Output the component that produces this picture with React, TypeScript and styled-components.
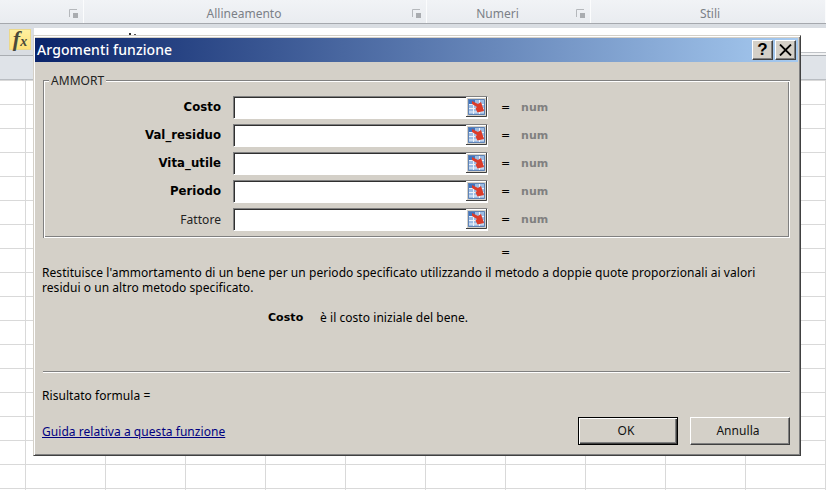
import React from "react";
import styled, { createGlobalStyle } from "styled-components";

const Global = createGlobalStyle`
  html, body { margin: 0; padding: 0; background: #fff; }
`;

const Page = styled.div`
  position: relative;
  width: 826px;
  height: 490px;
  overflow: hidden;
  display: flex;
  flex-direction: column;
  font-family: "Noto Sans", "DejaVu Sans", sans-serif;
  background: #fff;
`;

const Ribbon = styled.div`
  height: 24px;
  flex: none;
  box-sizing: border-box;
  display: flex;
  background: linear-gradient(#f1f3f6, #e9ecf0);
  border-bottom: 1px solid #a5a8ad;
`;

const RibbonGroup = styled.div<{ $w: number; $shift: number }>`
  width: ${(p) => p.$w}px;
  flex: ${(p) => (p.$w ? "none" : "1")};
  position: relative;
  box-sizing: border-box;
  padding-right: ${(p) => Math.max(p.$shift, 0)}px;
  padding-left: ${(p) => Math.max(-p.$shift, 0)}px;
  text-align: center;
  font-size: 12px;
  line-height: 27px;
  color: #7b8087;
  border-right: 1px solid #fbfcfd;
`;

const Launcher = styled.svg`
  position: absolute;
  right: 5px;
  top: 9px;
`;

const FormulaBar = styled.div`
  height: 32px;
  flex: none;
  display: flex;
  box-sizing: border-box;
  background: #d9dde2;
  border-bottom: 1px solid #a9adb2;
  padding-top: 5px;
`;

const FxButton = styled.div`
  width: 22px;
  height: 21px;
  margin-left: 9px;
  flex: none;
  background: linear-gradient(#fff0a0, #ffe27a);
  border: 1px solid #ecd98c;
  box-sizing: border-box;
  display: flex;
  align-items: baseline;
  justify-content: center;
  font-family: "Liberation Serif", serif;
  font-style: italic;
  font-weight: 700;
  font-size: 22px;
  line-height: 18px;
  color: #4a4a3a;
  white-space: nowrap;
`;

const FxSmall = styled.span`
  font-size: 14px;
  margin-left: 0;
`;

const FormulaInput = styled.div`
  flex: 1;
  margin-left: 3px;
  margin-top: -1px;
  height: 27px;
  position: relative;
  background: linear-gradient(#fff 0 24px, #c0c3c7 24px 25px, #f2f3f4 25px);
`;

const ClippedGlyph = styled.svg`
  position: absolute;
  left: 95px;
  top: 5px;
`;

const ColumnHeaders = styled.div`
  height: 24px;
  flex: none;
  background: #dfe3e8;
  border-bottom: 1px solid #b9bdc2;
  box-sizing: border-box;
`;

const Sheet = styled.div`
  flex: 1;
  background-color: #fff;
  background-image:
    linear-gradient(to right, #d9d9d9 1px, transparent 1px),
    linear-gradient(to bottom, #d9d9d9 1px, transparent 1px);
  background-size: 80px 24px;
  background-position: 25px 0;
`;

const Dialog = styled.div`
  position: absolute;
  left: 33px;
  top: 35px;
  width: 768px;
  height: 421px;
  box-sizing: border-box;
  display: flex;
  flex-direction: column;
  background: #d4d0c8;
  border-top: 1px solid #d4d0c8;
  border-left: 1px solid #d4d0c8;
  border-right: 1px solid #404040;
  border-bottom: 1px solid #404040;
  box-shadow: inset 1px 1px 0 #fff, inset -1px -1px 0 #808080;
  padding: 2px 2px 0 1px;
  font-size: 12px;
  letter-spacing: 0.05px;
  color: #000;
`;

const TitleBar = styled.div`
  height: 24px;
  flex: none;
  display: flex;
  align-items: center;
  justify-content: space-between;
  padding: 0 2px 0 2px;
  background: linear-gradient(to right, #0a246a, #a6caf0);
`;

const Title = styled.div`
  color: #fff;
  font-size: 14px;
  line-height: 22px;
  margin-top: -1px;
  font-weight: 500;
  letter-spacing: 0.1px;
`;

const TitleButtons = styled.div`
  display: flex;
  gap: 2px;
`;

const TitleButton = styled.div`
  width: 21px;
  height: 20px;
  box-sizing: border-box;
  background: #d4d0c8;
  border: 1px solid;
  border-color: #fff #404040 #404040 #fff;
  display: flex;
  align-items: center;
  justify-content: center;
  box-shadow: inset -1px -1px 0 #808080;
`;

const QuestionMark = styled.span`
  font-family: "Liberation Sans", sans-serif;
  font-weight: 700;
  font-size: 17px;
  line-height: 16px;
`;

const Body = styled.div`
  flex: 1;
  display: flex;
  flex-direction: column;
  padding: 18px 8px 0 7px;
`;

const GroupBox = styled.div`
  margin: 0 0 0 1px;
  padding: 13px 0 0 0;
  height: 158px;
  box-sizing: border-box;
  box-shadow: inset 1px 1px 0 #808080, inset 2px 2px 0 #fff, inset -1px -1px 0 #fff, inset -2px -2px 0 #808080;
  position: relative;
`;

const GroupLegend = styled.div`
  position: absolute;
  left: 6px;
  top: -6px;
  padding: 0 2px;
  background: #d4d0c8;
  font-size: 12px;
  line-height: 14px;
  color: #222;
`;

const ArgRow = styled.div`
  height: 28px;
  display: flex;
  align-items: center;
`;

const ArgLabel = styled.div<{ $bold?: boolean }>`
  width: 178px;
  flex: none;
  text-align: right;
  font-family: ${(p) => (p.$bold ? '"DejaVu Sans", sans-serif' : "inherit")};
  font-size: ${(p) => (p.$bold ? 11.7 : 12)}px;
  font-weight: ${(p) => (p.$bold ? 700 : 400)};
  color: ${(p) => (p.$bold ? "#000" : "#222")};
`;

const ArgInput = styled.div`
  width: 255px;
  height: 23px;
  margin-left: 12px;
  flex: none;
  box-sizing: border-box;
  background: #fff;
  border: 1px solid;
  border-color: #808080 #fff #fff #808080;
  box-shadow: inset 1px 1px 0 #303030;
  display: flex;
  justify-content: flex-end;
  align-items: center;
`;

const RangeIcon = styled.svg`
  display: block;
  flex: none;
`;

const Equals = styled.div`
  margin-left: 13px;
  width: 20px;
  flex: none;
  font-family: "DejaVu Sans", sans-serif;
  font-size: 11px;
`;

const NumHint = styled.div`
  font-family: "DejaVu Sans", sans-serif;
  font-size: 11px;
  font-weight: 700;
  color: #808080;
`;

const ResultEquals = styled.div`
  height: 15px;
  margin-top: 7px;
  padding-left: 459px;
  line-height: 15px;
  font-family: "DejaVu Sans", sans-serif;
  font-size: 11px;
`;

const Description = styled.p`
  margin: 5px 0 0 0;
  line-height: 15px;
  width: 745px;
`;

const ParamHelp = styled.div`
  display: flex;
  margin-top: 15px;
  padding-left: 226px;
  line-height: 15px;
`;

const ParamName = styled.span`
  font-family: "DejaVu Sans", sans-serif;
  font-size: 11px;
  font-weight: 700;
  width: 52px;
`;

const Separator = styled.div`
  height: 1px;
  margin-top: 46px;
  margin-left: 1px;
  background: #808080;
  border-bottom: 1px solid #fff;
`;

const ResultLine = styled.div`
  margin-top: 15px;
  line-height: 15px;
`;

const Footer = styled.div`
  display: flex;
  align-items: flex-end;
  justify-content: space-between;
  margin-top: 14px;
`;

const HelpLink = styled.a`
  color: #000080;
  text-decoration: underline;
  line-height: 15px;
  margin-bottom: 6px;
`;

const Buttons = styled.div`
  display: flex;
  gap: 12px;
`;

const Button = styled.div<{ $primary?: boolean }>`
  width: 100px;
  height: 28px;
  box-sizing: border-box;
  display: flex;
  align-items: center;
  justify-content: center;
  padding: 0 4px 2px 0;
  background: #d4d0c8;
  border: 1px solid;
  border-color: ${(p) => (p.$primary ? "#000" : "#fff #404040 #404040 #fff")};
  box-shadow: ${(p) =>
    p.$primary
      ? "inset 1px 1px 0 #fff, inset -1px -1px 0 #404040, inset -2px -2px 0 #808080"
      : "inset -1px -1px 0 #808080"};
  color: #111;
`;

const Range = () => (
  <RangeIcon width="21" height="20" viewBox="0 0 21 20">
    <rect width="21" height="20" fill="#d4d0c8" />
    <path d="M0 19.5H20.5V0" stroke="#404040" fill="none" />
    <path d="M0.5 19V0.5H20" stroke="#fff" fill="none" />
    <rect x="2" y="2" width="17" height="16" fill="#9dbde4" />
    <rect x="2" y="2" width="7" height="5" fill="#3f74c0" />
    <path d="M2 7.5H19M2 11.5H19M2 15H19M7.5 7V18M13.5 2V18" stroke="#eef3fa" />
    <path d="M2.5 2.5H18.5V17.5H2.5Z" stroke="#5f82b4" fill="none" />
    <path d="M6 4L12 7L15 5L18 14L11.5 15.5L9.5 11.5L11 10L6 7Z" fill="#dc3c2a" />
  </RangeIcon>
);

const args: [string, boolean][] = [
  ["Costo", true],
  ["Val_residuo", true],
  ["Vita_utile", true],
  ["Periodo", true],
  ["Fattore", false],
];

const launcher = (
  <Launcher width="9" height="9" viewBox="0 0 9 9">
    <path d="M0.5 8V0.5H8" stroke="#b5b8bc" fill="none" />
    <rect x="4" y="4" width="5" height="5" fill="#a9acb0" />
  </Launcher>
);

export default function App() {
  return (
    <Page>
      <Global />
      <Ribbon>
        <RibbonGroup $w={84} $shift={0}>{launcher}</RibbonGroup>
        <RibbonGroup $w={343} $shift={22}>
          Allineamento
          {launcher}
        </RibbonGroup>
        <RibbonGroup $w={164} $shift={22}>
          Numeri
          {launcher}
        </RibbonGroup>
        <RibbonGroup $w={0} $shift={-4}>Stili</RibbonGroup>
      </Ribbon>
      <FormulaBar>
        <FxButton>
          f<FxSmall>x</FxSmall>
        </FxButton>
        <FormulaInput>
          <ClippedGlyph width="8" height="3" viewBox="0 0 8 3">
            <rect x="0" y="0" width="2" height="2" fill="#333" />
            <rect x="5" y="1" width="2" height="2" fill="#555" />
          </ClippedGlyph>
        </FormulaInput>
      </FormulaBar>
      <ColumnHeaders />
      <Sheet />
      <Dialog>
        <TitleBar>
          <Title>Argomenti funzione</Title>
          <TitleButtons>
            <TitleButton>
              <QuestionMark>?</QuestionMark>
            </TitleButton>
            <TitleButton>
              <svg width="13" height="12" viewBox="0 0 13 12">
                <path d="M1 0.5L12 11.5M12 0.5L1 11.5" stroke="#000" strokeWidth="1.8" />
              </svg>
            </TitleButton>
          </TitleButtons>
        </TitleBar>
        <Body>
          <GroupBox>
            <GroupLegend>AMMORT</GroupLegend>
            {args.map(([name, bold]) => (
              <ArgRow key={name}>
                <ArgLabel $bold={bold}>{name}</ArgLabel>
                <ArgInput>
                  <Range />
                </ArgInput>
                <Equals>=</Equals>
                <NumHint>num</NumHint>
              </ArgRow>
            ))}
          </GroupBox>
          <ResultEquals>=</ResultEquals>
          <Description>
            Restituisce l'ammortamento di un bene per un periodo specificato utilizzando il metodo a doppie quote
            proporzionali ai valori residui o un altro metodo specificato.
          </Description>
          <ParamHelp>
            <ParamName>Costo</ParamName>
            <span>è il costo iniziale del bene.</span>
          </ParamHelp>
          <Separator />
          <ResultLine>Risultato formula =</ResultLine>
          <Footer>
            <HelpLink href="#">Guida relativa a questa funzione</HelpLink>
            <Buttons>
              <Button $primary>OK</Button>
              <Button>Annulla</Button>
            </Buttons>
          </Footer>
        </Body>
      </Dialog>
    </Page>
  );
}
